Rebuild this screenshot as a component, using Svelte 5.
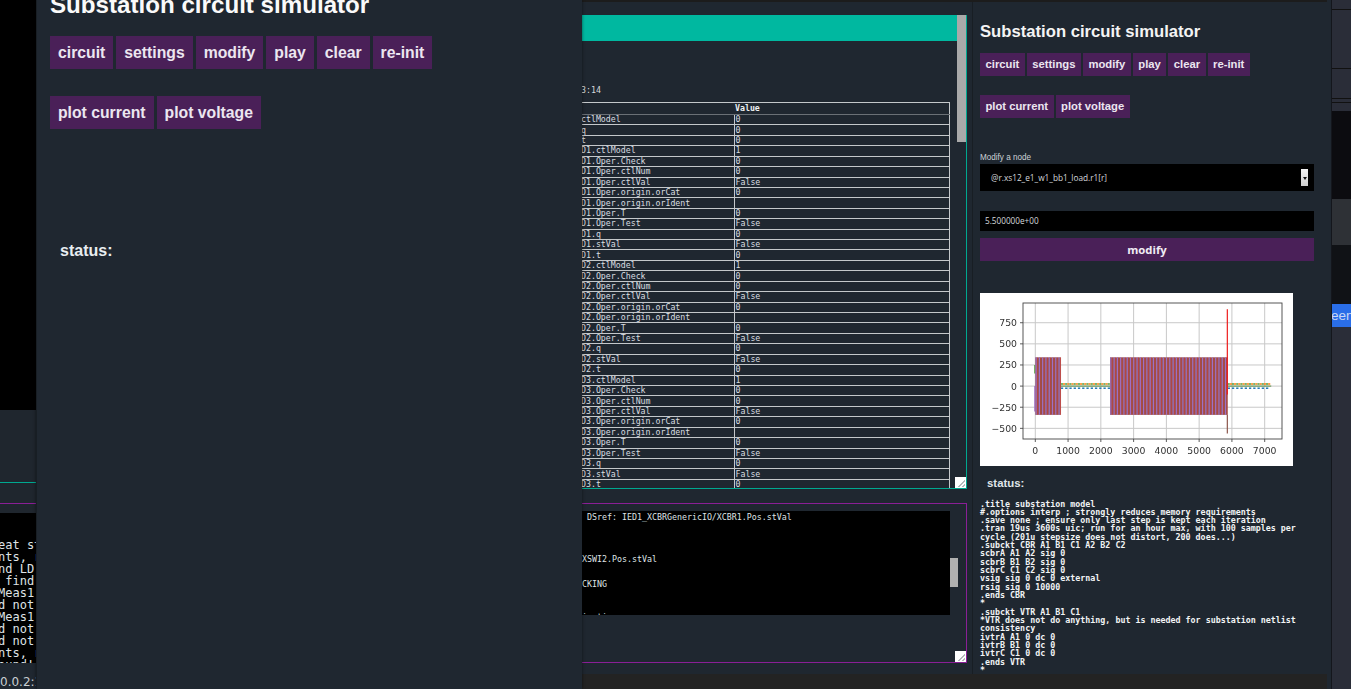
<script>
  const block = (p) => [
    `${p}ctlModel|1`, `${p}Oper.Check|0`, `${p}Oper.ctlNum|0`, `${p}Oper.ctlVal|False`,
    `${p}Oper.origin.orCat|0`, `${p}Oper.origin.orIdent|`, `${p}Oper.T|0`, `${p}Oper.Test|False`,
    `${p}q|0`, `${p}stVal|False`, `${p}t|0`
  ];
  const rows = ['ctlModel|0', 'q|0', 't|0', ...block('D1.'), ...block('D2.'), ...block('D3.')].map((r) => r.split('|'));

  const netlist = `.title substation model
#.options interp ; strongly reduces memory requirements
.save none ; ensure only last step is kept each iteration
.tran 19us 3600s uic; run for an hour max, with 100 samples per cycle (201u stepsize does not distort, 200 does...)
.subckt CBR A1 B1 C1 A2 B2 C2
scbrA A1 A2 sig 0
scbrB B1 B2 sig 0
scbrC C1 C2 sig 0
vsig sig 0 dc 0 external
rsig sig 0 10000
.ends CBR
*
.subckt VTR A1 B1 C1
*VTR does not do anything, but is needed for substation netlist consistency
ivtrA A1 0 dc 0
ivtrB B1 0 dc 0
ivtrC C1 0 dc 0
.ends VTR
*`;

  const termLines = ['eat st', 'nts, r', 'nd LD', ' find', 'Meas1,', 'd not', 'Meas1,', 'd not', 'd not', 'nts, r', 'ound!'];

  // chart scales, in the pixels of the 313x173 image
  const sx = (v) => 55.3 + v * 0.03277;
  const sy = (v) => 93.1 - v * 0.0845;
  const xTicks = [0, 1000, 2000, 3000, 4000, 5000, 6000, 7000];
  const yTicks = [750, 500, 250, 0, -250, -500];
  const fmt = (v) => (v < 0 ? '\u2212' + Math.abs(v) : String(v));

  const stripes = [];
  const addBlock = (from, to) => {
    for (let v = from; v < to - 40; v += 100) {
      stripes.push({ x: sx(v + 25), c: '#a06fc6', w: 1.2 });
      stripes.push({ x: sx(v + 70), c: '#d8383a', w: 0.6 });
    }
  };
  addBlock(0, 780);
  addBlock(2280, 5870);

  const idle = [];
  for (let v = 780; v < 2280; v += 130) idle.push(v);
  for (let v = 5870; v < 7150; v += 130) idle.push(v);
</script>

<main class="desktop">
  <section class="backdrop">
    <div class="back-black"></div>
    <div class="back-dark">
      <div class="line-teal"></div>
      <div class="line-purple"></div>
    </div>
    <pre class="back-term">{termLines.join('\n')}</pre>
    <div class="back-url">0.0.2:1</div>
  </section>

  <section class="middle">
    <div class="teal-box">
      <div class="teal-bar"></div>
      <div class="stamp">3:14</div>
      <table>
        <thead><tr><th></th><th>Value</th></tr></thead>
        <tbody>
          {#each rows as r}
            <tr><td>{r[0]}</td><td>{r[1]}</td></tr>
          {/each}
        </tbody>
      </table>
      <div class="scrollbar-a"></div>
      <div class="resizer"></div>
    </div>
    <div class="purple-box">
      <pre class="log"><span class="ds"> DSref: IED1_XCBRGenericIO/XCBR1.Pos.stVal</span>




XSWI2.Pos.stVal


CKING



ication:</pre>
      <div class="scrollbar-b"></div>
      <div class="resizer"></div>
    </div>
  </section>

  <aside class="right">
    <h1>Substation circuit simulator</h1>
    <div class="btns">
      {#each ['circuit', 'settings', 'modify', 'play', 'clear', 're-init'] as b}
        <button>{b}</button>
      {/each}
    </div>
    <div class="btns second">
      <button>plot current</button>
      <button>plot voltage</button>
    </div>
    <div class="field-label">Modify a node</div>
    <div class="select">
      <span>@r.xs12_e1_w1_bb1_load.r1[r]</span>
      <i class="spin"></i>
    </div>
    <div class="input">5.500000e+00</div>
    <button class="wide">modify</button>
    <svg class="chart" viewBox="0 0 313 173" width="313" height="173">
      <rect width="313" height="173" fill="#fff" />
      {#each xTicks as t}
        <line x1={sx(t)} x2={sx(t)} y1="10" y2="146" stroke="#c8c8c8" stroke-width="1" />
        <line x1={sx(t)} x2={sx(t)} y1="146" y2="149" stroke="#333" stroke-width="0.8" />
        <text x={sx(t)} y="160.5" text-anchor="middle">{t}</text>
      {/each}
      {#each yTicks as t}
        <line x1="43" x2="302" y1={sy(t)} y2={sy(t)} stroke="#c8c8c8" stroke-width="1" />
        <line x1="40" x2="43" y1={sy(t)} y2={sy(t)} stroke="#333" stroke-width="0.8" />
        <text x="37" y={sy(t) + 3.4} text-anchor="end">{fmt(t)}</text>
      {/each}
      {#each idle as v}
        <line x1={sx(v)} x2={sx(v + 65)} y1={sy(25)} y2={sy(25)} stroke="#4f9e3f" stroke-width="1.5" />
        <line x1={sx(v + 65)} x2={sx(v + 130)} y1={sy(25)} y2={sy(25)} stroke="#ff7f0e" stroke-width="1.5" />
        <line x1={sx(v)} x2={sx(v + 70)} y1={sy(-25)} y2={sy(-25)} stroke="#1f77b4" stroke-width="1.5" />
      {/each}
      <line x1={sx(780)} x2={sx(7200)} y1={sy(0)} y2={sy(0)} stroke="#6f9a5a" stroke-width="1.3" />
      <line x1={sx(-15)} x2={sx(-15)} y1={sy(250)} y2={sy(150)} stroke="#4f9e3f" stroke-width="1.2" />
      <line x1={sx(-15)} x2={sx(-15)} y1={sy(0)} y2={sy(-300)} stroke="#a06fc6" stroke-width="1.2" />
      <rect x={sx(0)} y={sy(340)} width={sx(780) - sx(0)} height={sy(-340) - sy(340)} fill="#8c564b" />
      <rect x={sx(2280)} y={sy(340)} width={sx(5870) - sx(2280)} height={sy(-340) - sy(340)} fill="#8c564b" />
      {#each stripes as s}
        <line x1={s.x} x2={s.x} y1={sy(340)} y2={sy(-340)} stroke={s.c} stroke-width={s.w} />
      {/each}
      <line x1={sx(5860)} x2={sx(5860)} y1={sy(909)} y2={sy(-100)} stroke="#ee1c1c" stroke-width="1.2" />
      <line x1={sx(5860)} x2={sx(5860)} y1={sy(-340)} y2={sy(-560)} stroke="#8c564b" stroke-width="1.2" />
      <rect x="43" y="10" width="259" height="136" fill="none" stroke="#444" stroke-width="0.9" />
    </svg>
    <div class="status">status:</div>
    <pre class="netlist">{netlist}</pre>
  </aside>

  <div class="top-strip"></div>
  <div class="bottom-strip"></div>

  <section class="far-right">
    <div class="fr-top"></div>
    <div class="fr-term"></div>
    <div class="fr-chart"></div>
    <div class="fr-dark"></div>
    <div class="fr-btn">een</div>
  </section>

  <aside class="left">
    <h1>Substation circuit simulator</h1>
    <div class="btns">
      {#each ['circuit', 'settings', 'modify', 'play', 'clear', 're-init'] as b}
        <button>{b}</button>
      {/each}
    </div>
    <div class="btns second">
      <button>plot current</button>
      <button>plot voltage</button>
    </div>
    <div class="status">status:</div>
  </aside>
</main>

<style>
  :global(body) {
    margin: 0;
    background: #1f2730;
    overflow: hidden;
  }
  .desktop {
    position: relative;
    width: 1351px;
    height: 689px;
    overflow: hidden;
    background: #1f2730;
    font-family: 'Liberation Sans', Arial, sans-serif;
  }

  /* windows on the desktop */
  .backdrop { position: absolute; left: 0; top: 0; width: 36px; height: 689px; overflow: hidden; display: flex; flex-direction: column; }
  .back-black { height: 410px; background: #000; flex: none; }
  .back-dark { height: 103px; background: #1f262e; flex: none; position: relative; }
  .line-teal { position: absolute; left: 0; right: 0; top: 72px; height: 1px; background: #00a890; }
  .line-purple { position: absolute; left: 0; right: 0; top: 93px; height: 1px; background: #8a1f96; }
  .back-term {
    margin: 0; height: 150px; flex: none; box-sizing: border-box; padding: 26px 0 0; overflow: hidden; background: #000;
    color: #dfe3e6; font: 12px/12px 'DejaVu Sans Mono', monospace; transform: translateX(-2px); width: 40px;
  }
  .back-url { color: #c9ced2; font: 12px/36px 'DejaVu Sans', sans-serif; margin-top: 1px; white-space: nowrap; }

  .left {
    position: absolute; left: 36px; top: 0; width: 546px; height: 689px; box-sizing: border-box;
    background: #1f2730; border-left: 1px solid #181e24; padding-left: 13px;
    box-shadow: 0 0 3px #0008;
  }
  .left h1 { margin: -9px 0 0; font-size: 24.15px; line-height: 28px; font-weight: 700; color: #fafafa; white-space: nowrap; }
  .left .btns { display: flex; gap: 3px; margin-top: 17px; }
  .left .btns.second { margin-top: 27px; }
  .left button { height: 33px; padding: 0 8px; font: 700 15.75px 'Liberation Sans', Arial, sans-serif; }
  .left .status { margin: 112px 0 0 10px; font-size: 16px; line-height: 20px; font-weight: 700; color: #e8edf0; }

  button { border: 0; background: #4a2058; color: #ece6f0; margin: 0; }

  .middle { position: absolute; left: 582px; top: 0; width: 390px; height: 689px; background: #1f2730; overflow: hidden; }
  .top-strip { position: absolute; left: 582px; top: 0; width: 745px; height: 2px; background: #1c1c1c; }
  .teal-box {
    position: absolute; left: -4px; top: 15px; width: 389px; height: 474px; box-sizing: border-box;
    border-right: 1px solid #00a890; border-bottom: 1px solid #00a890; overflow: hidden;
  }
  .teal-bar { height: 26px; width: 379px; background: #00b8a0; }
  .stamp { position: absolute; left: 3px; top: 70px; color: #d5d9dc; font: 8.3px/10px 'DejaVu Sans Mono', monospace; }
  table {
    position: absolute; left: 3px; top: 87px; width: 369px; border-collapse: collapse; table-layout: fixed;
    color: #d9dde0; font: 8.25px/9px 'DejaVu Sans Mono', monospace;
  }
  th, td { border: 1px solid #c4c8cb; padding: 0 1px; height: 9.43px; text-align: left; white-space: nowrap; overflow: hidden; }
  th { font-weight: 700; color: #eef0f2; height: 11px; border-left: 0; border-bottom-color: #6a7076; }
  th:first-child, td:first-child { width: 152px; border-left: 0; padding-left: 0; }
  th:first-child { border-right: 0; }
  .scrollbar-a { position: absolute; right: 0; top: 0; width: 9px; height: 127px; background: #a9a9a9; }
  .resizer {
    position: absolute; right: 0; bottom: 0; width: 11px; height: 11px; box-sizing: border-box;
    background: linear-gradient(135deg, #fff 0 45%, transparent 45%), repeating-linear-gradient(135deg, #fff 0 1.5px, #b5b9bb 1.5px 3px);
    border: 1px solid #fff;
  }
  .purple-box {
    position: absolute; left: -4px; top: 503px; width: 389px; height: 160px; box-sizing: border-box;
    border-top: 1px solid #8a1f96; border-right: 1px solid #8a1f96; border-bottom: 1px solid #8a1f96;
  }
  .log {
    margin: 0; position: absolute; left: 0; top: 7px; width: 372px; height: 104px; box-sizing: border-box; padding: 2px 0 0 4px; overflow: hidden;
    background: #000; color: #dfe3e6; font: 8.3px/8.33px 'DejaVu Sans Mono', monospace;
  }
  .scrollbar-b { position: absolute; left: 372px; top: 54px; width: 8px; height: 29px; background: #b0b0b0; }

  .right {
    position: absolute; left: 972px; top: 2px; width: 359px; height: 687px; box-sizing: border-box;
    background: #1f2730; border-left: 1px solid #181e24; padding-left: 7px; overflow: hidden;
  }
  .right h1 { margin: 20px 0 0; font-size: 16.67px; line-height: 20px; font-weight: 700; color: #f4f4f4; white-space: nowrap; }
  .right .btns { display: flex; gap: 2px; margin-top: 11px; }
  .right .btns.second { margin-top: 19px; }
  .right button { height: 23px; padding: 0 5.5px 1px; font: 700 11.25px 'Liberation Sans', Arial, sans-serif; }
  .field-label { margin-top: 35px; font-size: 8.15px; line-height: 10px; color: #cdd2d6; }
  .select {
    margin-top: 1px; width: 334px; height: 27px; box-sizing: border-box; background: #000; color: #d6d9dc;
    display: flex; align-items: center; justify-content: space-between; padding: 0 6px 0 11px;
    font: 8.25px 'Open Sans', sans-serif;
  }
  .spin { width: 7px; height: 17px; background: linear-gradient(#f4f4f4, #cfcfcf); position: relative; }
  .spin::after {
    content: ''; position: absolute; left: 1.5px; top: 8px;
    border-left: 2px solid transparent; border-right: 2px solid transparent; border-top: 3px solid #111;
  }
  .input {
    margin-top: 20px; width: 334px; height: 20px; box-sizing: border-box; background: #000; color: #d6d9dc;
    padding-left: 5px; font: 8.2px/20px 'Open Sans', sans-serif;
  }
  .right button.wide {
    display: block; margin-top: 7px; width: 334px; height: 23px; padding: 0 0 1px; font: 700 11.3px 'Open Sans', sans-serif; color: #f0ecf4;
  }
  .chart { display: block; margin-top: 32px; filter: blur(0.35px); }
  .chart text { font: 9.3px 'DejaVu Sans', sans-serif; fill: #333; }
  .right .status { margin: 10px 0 0 7px; font-size: 11.4px; line-height: 15px; font-weight: 700; color: #dfe4e8; }
  .netlist {
    margin: 8.5px 0 0; width: 320px; white-space: pre-wrap; color: #f2f4f5;
    font: 700 8.33px/8.33px 'DejaVu Sans Mono', monospace;
  }

  .bottom-strip { position: absolute; left: 582px; top: 674px; width: 745px; height: 15px; background: #232323; }

  .far-right { position: absolute; left: 1331px; top: 0; width: 20px; height: 689px; background: #2a2d38; border-left: 1px solid #14161c; box-sizing: border-box; display: flex; flex-direction: column; overflow: hidden; }
  .fr-top { height: 111px; flex: none; background: linear-gradient(#2a2d38 0 9px, #111 9px 10px, #2a2d38 10px 68px, #111 68px 69px, #2a2d38 69px 98px, #111 98px 99px, #2a2d38 99px 102px, #111 102px 103px, #2a2d38 103px); }
  .fr-term { height: 88px; flex: none; background: #0c0c10; }
  .fr-chart { height: 46px; flex: none; background: #2e3136; }
  .fr-dark { height: 59px; flex: none; background: #101216; }
  .fr-btn { height: 23px; flex: none; background: #2a6ee8; color: #c9d8f5; font: 13.5px/23px 'Liberation Sans', Arial, sans-serif; white-space: nowrap; text-indent: -1px; }
</style>
